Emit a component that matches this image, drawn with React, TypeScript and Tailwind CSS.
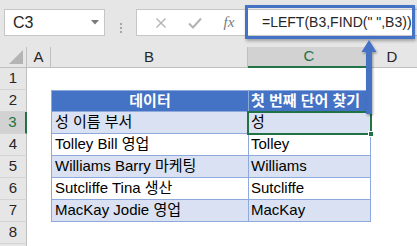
import React from "react";

type Row = { n: number; b?: string; c?: string; head?: boolean; band?: boolean };

const rows: Row[] = [
  { n: 1 },
  { n: 2, b: "데이터", c: "첫 번째 단어 찾기", head: true },
  { n: 3, b: "성 이름 부서", c: "성", band: true },
  { n: 4, b: "Tolley Bill 영업", c: "Tolley" },
  { n: 5, b: "Williams Barry 마케팅", c: "Williams", band: true },
  { n: 6, b: "Sutcliffe Tina 생산", c: "Sutcliffe" },
  { n: 7, b: "MacKay Jodie 영업", c: "MacKay", band: true },
  { n: 8 },
  { n: 9 },
];

const FONT = "font-['Liberation_Sans','Noto_Sans_CJK_KR',sans-serif]";

export default function App() {
  return (
    <div className={`relative w-[417px] h-[246px] overflow-hidden bg-white ${FONT}`}>
      {/* toolbar */}
      <div className="flex h-[47px] bg-[#e6e6e6] pt-[9px]">
        <div className="ml-[4px] flex h-[27px] w-[101px] items-center justify-between border border-[#c6c6c6] bg-white pl-[8px] pr-[5px]">
          <span className="text-[16px] text-[#262626]">C3</span>
          <svg width="8" height="5" viewBox="0 0 8 5">
            <polygon points="0,0 8,0 4,4.5" fill="#7a7a7a" />
          </svg>
        </div>
        <div className="flex w-[31px] flex-col items-center justify-center gap-[2px]">
          <span className="h-[2px] w-[2px] bg-[#a6a6a6]" />
          <span className="h-[2px] w-[2px] bg-[#a6a6a6]" />
          <span className="h-[2px] w-[2px] bg-[#a6a6a6]" />
        </div>
        <div className="flex h-[27px] flex-1 items-center border border-r-0 border-[#c6c6c6] bg-white">
          <div className="flex w-[34px] justify-end pr-[4px]">
            <svg width="12" height="12" viewBox="0 0 12 12">
              <path d="M1.5 1.5 L10.5 10.5 M10.5 1.5 L1.5 10.5" stroke="#b3b3b3" strokeWidth="1.4" />
            </svg>
          </div>
          <div className="flex w-[36px] justify-center pl-[12px]">
            <svg width="14" height="12" viewBox="0 0 14 12">
              <path d="M1 6.5 L5 10.5 L13 1.5" stroke="#b3b3b3" strokeWidth="2" fill="none" />
            </svg>
          </div>
          <div className="flex w-[36px] justify-center pl-[8px]">
            <span className="font-['Liberation_Serif',serif] text-[15px] italic text-[#7a7a7a]">fx</span>
          </div>
          <span className="ml-[19px] whitespace-pre text-[14px] text-[#262626]">=LEFT(B3,FIND(" ",B3))</span>
        </div>
      </div>

      {/* column headers */}
      <div className="flex h-[21px] bg-[#e6e6e6] text-[15px] text-[#262626]">
        <div className="relative w-[27px] border-r border-b border-[#bfbfbf]">
          <svg className="absolute bottom-[3px] right-[3px]" width="14" height="14" viewBox="0 0 14 14">
            <polygon points="14,0 14,14 0,14" fill="#b4b4b4" />
          </svg>
        </div>
        <div className="flex w-[24px] items-center justify-center border-r border-b border-[#bfbfbf]">A</div>
        <div className="flex w-[197px] items-center justify-center border-r border-b border-[#bfbfbf]">B</div>
        <div className="flex w-[123px] items-center justify-center border-r border-[#bfbfbf] border-b-2 border-b-[#217346] bg-[#d2d2d2] text-[#217346]">C</div>
        <div className="flex flex-1 items-center justify-center border-b border-[#bfbfbf] pr-[4px]">D</div>
      </div>

      {/* sheet rows */}
      {rows.map((r) => {
        const inTable = !!r.b;
        const sel = r.n === 3;
        const bg = r.head ? "bg-[#4472c4]" : r.band ? "bg-[#d9e1f2]" : "bg-white";
        const txt = r.head ? "font-bold text-white" : "text-black";
        return (
          <div key={r.n} className="flex h-[22px]">
            <div
              className={`flex w-[27px] items-center justify-center border-b border-[#d4d4d4] text-[15px] ${
                sel
                  ? "border-r-2 border-r-[#217346] bg-[#d2d2d2] text-[#217346]"
                  : "border-r border-r-[#bfbfbf] bg-[#e6e6e6] text-[#262626]"
              }`}
            >
              {r.n < 9 ? r.n : ""}
            </div>
            <div className="w-[24px]" />
            {inTable ? (
              <>
                <div
                  className={`flex w-[197px] items-center overflow-hidden whitespace-nowrap border-l border-b border-[#8ea9db] text-[15px] ${bg} ${txt} ${
                    r.head ? "justify-center border-t" : "pl-[3px]"
                  }`}
                >
                  {r.b}
                </div>
                <div
                  className={`flex w-[123px] items-center overflow-hidden whitespace-nowrap border-l border-r border-b border-[#8ea9db] pl-[2px] text-[15px] ${bg} ${txt} ${
                    r.head ? "border-t" : ""
                  }`}
                >
                  {r.c}
                </div>
              </>
            ) : (
              <div className="w-[320px]" />
            )}
            <div className="flex-1" />
          </div>
        );
      })}

      {/* selection outline on C3 */}
      <div className="pointer-events-none absolute left-[247px] top-[111px] h-[24px] w-[125px] border-2 border-[#217346]" />
      <div className="absolute left-[368px] top-[131px] h-[6px] w-[6px] border border-white bg-[#217346]" />

      {/* annotation box around formula */}
      <div className="absolute left-[245px] top-[5px] h-[34px] w-[170px] border-[3px] border-[#4472c4] shadow-[1px_2px_3px_rgba(0,0,0,0.3)]" />

      {/* arrow */}
      <svg className="absolute left-[359px] top-[38px]" width="22" height="82" viewBox="0 0 22 82">
        <defs>
          <filter id="sh" x="-50%" y="-10%" width="200%" height="130%">
            <feDropShadow dx="1" dy="1.5" stdDeviation="1.2" floodColor="#000" floodOpacity="0.35" />
          </filter>
        </defs>
        <g filter="url(#sh)">
          <polygon points="10,2 17.5,14 13,14 13,76 7,76 7,14 2.5,14" fill="#4472c4" />
        </g>
      </svg>
    </div>
  );
}
